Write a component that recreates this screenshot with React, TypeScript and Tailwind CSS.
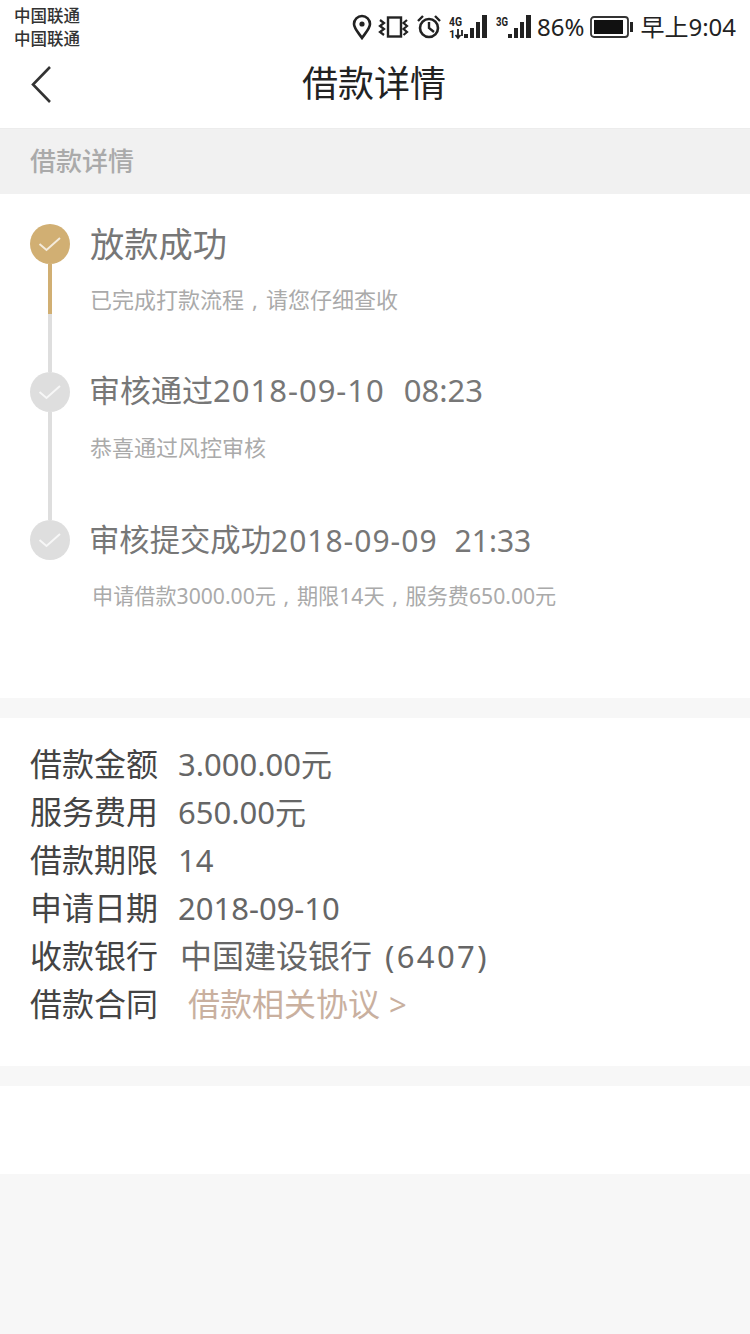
import type { ReactNode } from "react";

const FONT = "font-['Noto_Sans','Noto_Sans_CJK_SC',sans-serif]";

function Check() {
  return (
    <svg width="24" height="16" viewBox="0 0 24 16" fill="none">
      <path d="M1.5 8 L8.5 14 L22 2" stroke="#ffffff" strokeOpacity="0.75" strokeWidth="2" />
    </svg>
  );
}

function StatusIcons() {
  return (
    <div className="flex items-center pl-[351px]">
      <svg width="22" height="26" viewBox="0 0 22 26" fill="none">
        <path d="M11 24 C6 17 3 14 3 10 A8 8 0 0 1 19 10 C19 14 16 17 11 24 Z" stroke="#222" strokeWidth="2.6" />
        <circle cx="11" cy="10" r="2.6" fill="#222" />
      </svg>
      <svg width="32" height="24" viewBox="0 0 32 24" fill="none" className="ml-[5px]">
        <rect x="10" y="2.5" width="13" height="19" stroke="#222" strokeWidth="2.4" />
        <path d="M2 5 L6 8 L2 11 L6 14 L2 17 L6 20 M29 5 L25.500 8 L29 11 L25.500 14 L29 17 L25.500 20" stroke="#222" strokeWidth="2.2" />
      </svg>
      <svg width="26" height="26" viewBox="0 0 26 26" fill="none" className="ml-[6px]">
        <circle cx="13" cy="14" r="9" stroke="#222" strokeWidth="2.6" />
        <path d="M13 8 V14 L18 18 M2 7 L7 2 M24 7 L19 2" stroke="#222" strokeWidth="2.4" />
      </svg>
      <svg width="40" height="28" viewBox="0 0 40 28" className="ml-[7px]">
        <text x="0" y="13" fontSize="13" fontWeight="700" fill="#222" fontFamily="Roboto" textLength="13" lengthAdjust="spacingAndGlyphs">4G</text>
        <text x="0" y="25" fontSize="11" fontWeight="700" fill="#222" fontFamily="Roboto">1</text>
        <path d="M9 16 V25 M6.500 22 L9 25 L11.500 22 M13 17 V23" stroke="#222" strokeWidth="1.8" fill="none" />
        <path d="M15 21h4v4h-4z M21 15h4v10h-4z M27 9h4v16h-4z M33 2h5v23h-5z" fill="#222" />
      </svg>
      <svg width="37" height="28" viewBox="0 0 37 28" className="ml-[7px]">
        <text x="0" y="13" fontSize="13" fontWeight="700" fill="#222" fontFamily="Roboto" textLength="12" lengthAdjust="spacingAndGlyphs">3G</text>
        <path d="M12 21h4v4h-4z M18 15h4v10h-4z M24 9h4v16h-4z M30 2h5v23h-5z" fill="#222" />
      </svg>
      <span className="ml-[4px] text-[24px] leading-none text-[#222]">86%</span>
      <svg width="44" height="22" viewBox="0 0 44 22" fill="none" className="ml-[6px]">
        <rect x="1" y="1" width="37" height="20" rx="3" stroke="#333" strokeWidth="1.8" />
        <rect x="4" y="4" width="29" height="14" fill="#111" />
        <rect x="40" y="6" width="3" height="10" fill="#222" />
      </svg>
      <span className="ml-[6px] text-[24px] leading-none text-[#222]">早上9:04</span>
    </div>
  );
}

function Comma({ w }: { w: string }) {
  return <span className={`inline-block text-center ${w}`}>,</span>;
}

function Step({ active, last, title, desc, titleShift, descShift }: { active?: boolean; last?: boolean; title: ReactNode; desc: ReactNode; titleShift: string; descShift: string }) {
  return (
    <div className="flex h-[148px]">
      <div className="flex w-[60px] flex-col items-start">
        <div className={`flex h-10 w-10 shrink-0 items-center justify-center rounded-full ${active ? "bg-[#d1af73]" : "bg-[#dedede]"}`}>
          <Check />
        </div>
        {!last && (
          <div className="ml-[18px] flex w-1 grow flex-col bg-[#dedede]">
            {active && <div className="h-[50px] bg-[#d1af73]" />}
          </div>
        )}
      </div>
      <div className="min-w-0">
        <div className={`flex h-10 items-center whitespace-pre text-[#777] ${titleShift}`}>{title}</div>
        <div className={`whitespace-pre leading-[30px] text-[#aaa] ${descShift}`}>{desc}</div>
      </div>
    </div>
  );
}

function Row({ label, children }: { label: string; children: ReactNode }) {
  return (
    <div className="flex h-12 items-center whitespace-pre">
      <span className="w-[127px] text-[32px] text-[#444]">{label}</span>
      {children}
    </div>
  );
}

export default function App() {
  return (
    <div className={`flex min-h-[1334px] w-[750px] flex-col bg-[#f7f7f7] ${FONT}`}>
      <header className="relative h-[129px] shrink-0 border-b border-[#ececec] bg-white">
        <div className="absolute left-[14px] top-[4px] text-[16.5px] font-medium leading-[23px] text-[#333]">
          <div>中国联通</div>
          <div>中国联通</div>
        </div>
        <div className="absolute left-0 top-[13px]">
          <StatusIcons />
        </div>
        <svg width="24" height="40" viewBox="0 0 24 40" fill="none" className="absolute left-[30px] top-[65px]">
          <path d="M20 2 L3 19.5 L20 37" stroke="#333" strokeWidth="2.6" />
        </svg>
        <h1 className="absolute inset-x-0 top-[61px] pr-[2px] text-center text-[36px] font-normal leading-[46px] text-[#222]">借款详情</h1>
      </header>

      <div className="flex h-[65px] shrink-0 items-center bg-[#f1f1f1] pl-[30px] text-[26px] font-medium text-[#aaa]">借款详情</div>

      <section className="h-[504px] shrink-0 bg-white pl-[30px] pt-[30px]">
        <Step
          active
          titleShift=""
          descShift="mt-[20px] text-[22px]"
          title={<span className="text-[34.25px]">放款成功</span>}
          desc={<>已完成打款流程<Comma w="w-[22px]" />请您仔细查收</>}
        />
        <Step
          titleShift="-ml-px -translate-y-0.5"
          descShift="mt-[20px] text-[22px]"
          title={
            <>
              <span className="text-[31px]">审核通过</span>
              <span className="text-[31px] tracking-[1px]">2018-09-10</span>
              <span className="pl-[19px] text-[31px]">08:23</span>
            </>
          }
          desc="恭喜通过风控审核"
        />
        <Step
          last
          titleShift="-ml-px"
          descShift="mt-[21px] text-[21.15px]"
          title={
            <>
              <span className="text-[30.33px]">审核提交成功</span>
              <span className="text-[30px] tracking-[1px]">2018-09-09</span>
              <span className="pl-[17px] text-[30px]">21:33</span>
            </>
          }
          desc={<span className="pl-[2px]">申请借款3000.00元<Comma w="w-[21px]" />期限14天<Comma w="w-[21px]" />服务费650.00元</span>}
        />
      </section>

      <section className="mt-5 h-[348px] shrink-0 bg-white pl-[30px] pt-[22px]">
        <Row label="借款金额"><span className="pl-[21px] text-[31px] text-[#666]">3.000.00元</span></Row>
        <Row label="服务费用"><span className="pl-[21px] text-[31px] text-[#666]">650.00元</span></Row>
        <Row label="借款期限"><span className="pl-[21px] text-[31px] text-[#666]">14</span></Row>
        <Row label="申请日期"><span className="pl-[21px] text-[31px] text-[#666]">2018-09-10</span></Row>
        <Row label="收款银行">
          <span className="pl-[23px] text-[32px] text-[#666]">中国建设银行</span>
          <span className="pl-[13px] text-[31px] tracking-[2.4px] text-[#666]">(6407)</span>
        </Row>
        <Row label="借款合同">
          <span className="pl-[31px] text-[32px] text-[#c9b09f]">借款相关协议</span>
          <span className="pl-[9px] text-[31px] text-[#c9b09f]">&gt;</span>
        </Row>
      </section>

      <div className="mt-5 h-[88px] shrink-0 bg-white" />
    </div>
  );
}
